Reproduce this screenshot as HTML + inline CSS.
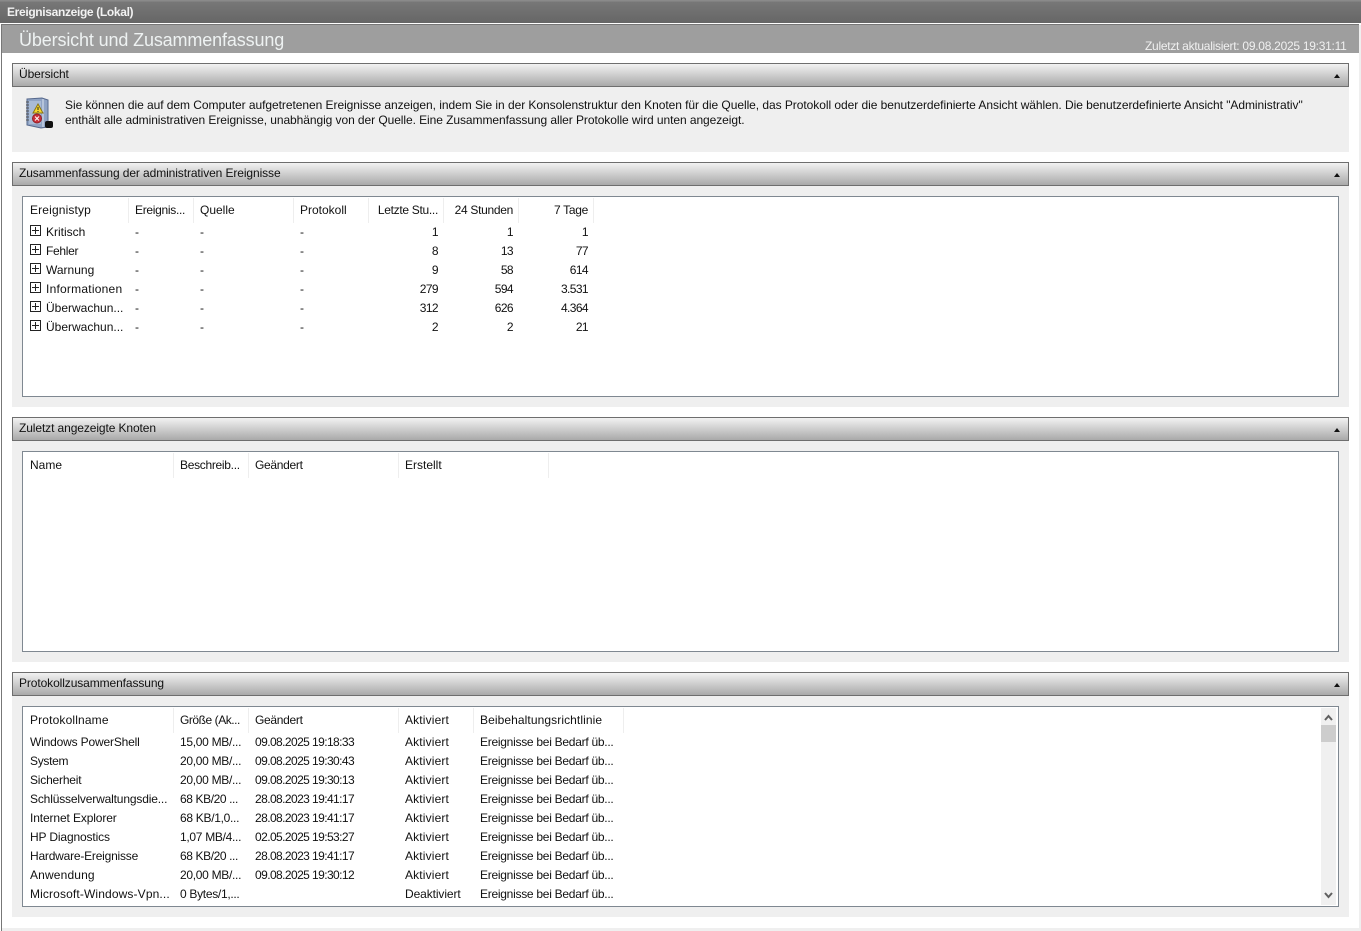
<!DOCTYPE html>
<html lang="de"><head><meta charset="utf-8"><title>Ereignisanzeige</title>
<style>
html,body{margin:0;padding:0;background:#fff;width:1361px;height:931px;overflow:hidden}
body{position:relative;font:12px/15px "Liberation Sans",sans-serif;color:#111}
div,span{position:absolute;white-space:nowrap}
.sh{left:12px;width:1335px;height:22px;border:1px solid #6e6e6e;background:linear-gradient(#f2f2f2,#a9a9a9)}
.sh span{left:6px;top:3px;letter-spacing:-.1px}
.sh i{position:absolute;right:8px;top:10px;width:0;height:0;border:3px solid transparent;border-top:0;border-bottom:4px solid #111}
.bd{left:12px;width:1337px;background:#efefef}
.bx{left:22px;width:1315px;height:199px;border:1px solid #7f8891;background:#fff}
.c{height:25px;width:1px;background:#eee}
.d{letter-spacing:-.58px}
.n{letter-spacing:-.6px}
.e{letter-spacing:-.27px}
.t{letter-spacing:-.3px}
.w{letter-spacing:.15px}
.p{width:9px;height:9px;border:1px solid #222;left:30px;background:linear-gradient(#222,#222) center/7px 1px no-repeat,linear-gradient(#222,#222) center/1px 7px no-repeat,#fff}
</style></head><body>
<div style="left:0;top:0;width:1361px;height:23px;background:linear-gradient(#8a8a8a 0,#8a8a8a 1px,#777 2px,#666 100%)"></div>
<span style="left:7px;top:5px;color:#f2f2f2;font-weight:bold;letter-spacing:-.34px">Ereignisanzeige (Lokal)</span>
<div style="left:1px;top:24px;width:1358px;height:1px;background:#777"></div>
<div style="left:1px;top:24px;width:1px;height:907px;background:#777"></div>
<div style="left:2px;top:25px;width:1357px;height:28px;background:#9e9e9e"></div>
<div style="left:1359px;top:25px;width:2px;height:906px;background:#efefef"></div>
<div style="left:2px;top:928px;width:1359px;height:3px;background:#efefef"></div>
<span style="left:19px;top:28px;font-size:18px;line-height:24px;color:#eef2f2;letter-spacing:-.14px">Übersicht und Zusammenfassung</span>
<span style="left:1145px;top:39px;color:#f0f0f0;letter-spacing:-.27px">Zuletzt aktualisiert: 09.08.2025 19:31:11</span>

<div class="sh" style="top:63px"><span>Übersicht</span><i></i></div>
<div class="bd" style="top:87px;height:65px"></div>
<svg style="position:absolute;left:25px;top:97px" width="30" height="33" viewBox="0 0 30 33">
<path d="M2 2l15-1 6 2v27l-7 1-14-3z" fill="#8fa3c4" stroke="#56688c"/>
<path d="M18 2v28" stroke="#dde4ef"/>
<path d="M4 4h12v23H4z" fill="#a9bbd6"/>
<path d="M1 5h3M1 8h3M1 11h3M1 14h3M1 17h3M1 20h3M1 23h3" stroke="#555"/>
<path d="M13 7l5 9H8z" fill="#f5d72c" stroke="#8a7414"/><path d="M13 10v3M13 14v1" stroke="#222"/>
<circle cx="12" cy="21.500" r="4.500" fill="#c9303a" stroke="#8f2028"/><path d="M10 19.500l4 4M14 19.500l-4 4" stroke="#fff"/>
<rect x="20" y="24" width="8" height="7" rx="2" fill="#111"/>
</svg>
<span style="left:65px;top:98px;letter-spacing:-.05px">Sie können die auf dem Computer aufgetretenen Ereignisse anzeigen, indem Sie in der Konsolenstruktur den Knoten für die Quelle, das Protokoll oder die benutzerdefinierte Ansicht wählen. Die benutzerdefinierte Ansicht "Administrativ"</span>
<span style="left:65px;top:113px;letter-spacing:-.07px">enthält alle administrativen Ereignisse, unabhängig von der Quelle. Eine Zusammenfassung aller Protokolle wird unten angezeigt.</span>

<div class="sh" style="top:162px"><span>Zusammenfassung der administrativen Ereignisse</span><i></i></div>
<div class="bd" style="top:186px;height:221px"></div>
<div class="bx" style="top:196px"></div>
<div class="c" style="left:128px;top:198px"></div><div class="c" style="left:193px;top:198px"></div><div class="c" style="left:293px;top:198px"></div><div class="c" style="left:368px;top:198px"></div><div class="c" style="left:443px;top:198px"></div><div class="c" style="left:518px;top:198px"></div><div class="c" style="left:593px;top:198px"></div>
<span class="w" style="left:30px;top:203px">Ereignistyp</span><span class="t" style="left:135px;top:203px">Ereignis...</span><span style="left:200px;top:203px">Quelle</span><span style="left:300px;top:203px">Protokoll</span><span class="t" style="right:923px;top:203px">Letzte Stu...</span><span class="t" style="right:848px;top:203px">24 Stunden</span><span class="t" style="right:773px;top:203px">7 Tage</span>

<div class="p" style="top:225px"></div><span style="left:46px;top:225px">Kritisch</span><span style="left:135px;top:225px">-</span><span style="left:200px;top:225px">-</span><span style="left:300px;top:225px">-</span><span class="n" style="right:923px;top:225px">1</span><span class="n" style="right:848px;top:225px">1</span><span class="n" style="right:773px;top:225px">1</span>
<div class="p" style="top:244px"></div><span class="t" style="left:46px;top:244px">Fehler</span><span style="left:135px;top:244px">-</span><span style="left:200px;top:244px">-</span><span style="left:300px;top:244px">-</span><span class="n" style="right:923px;top:244px">8</span><span class="n" style="right:848px;top:244px">13</span><span class="n" style="right:773px;top:244px">77</span>
<div class="p" style="top:263px"></div><span style="left:46px;top:263px">Warnung</span><span style="left:135px;top:263px">-</span><span style="left:200px;top:263px">-</span><span style="left:300px;top:263px">-</span><span class="n" style="right:923px;top:263px">9</span><span class="n" style="right:848px;top:263px">58</span><span class="n" style="right:773px;top:263px">614</span>
<div class="p" style="top:282px"></div><span class="w" style="left:46px;top:282px;letter-spacing:.23px">Informationen</span><span style="left:135px;top:282px">-</span><span style="left:200px;top:282px">-</span><span style="left:300px;top:282px">-</span><span class="n" style="right:923px;top:282px">279</span><span class="n" style="right:848px;top:282px">594</span><span class="n" style="right:773px;top:282px">3.531</span>
<div class="p" style="top:301px"></div><span style="left:46px;top:301px">Überwachun...</span><span style="left:135px;top:301px">-</span><span style="left:200px;top:301px">-</span><span style="left:300px;top:301px">-</span><span class="n" style="right:923px;top:301px">312</span><span class="n" style="right:848px;top:301px">626</span><span class="n" style="right:773px;top:301px">4.364</span>
<div class="p" style="top:320px"></div><span style="left:46px;top:320px">Überwachun...</span><span style="left:135px;top:320px">-</span><span style="left:200px;top:320px">-</span><span style="left:300px;top:320px">-</span><span class="n" style="right:923px;top:320px">2</span><span class="n" style="right:848px;top:320px">2</span><span class="n" style="right:773px;top:320px">21</span>

<div class="sh" style="top:417px"><span>Zuletzt angezeigte Knoten</span><i></i></div>
<div class="bd" style="top:441px;height:221px"></div>
<div class="bx" style="top:451px"></div>
<div class="c" style="left:173px;top:453px"></div><div class="c" style="left:248px;top:453px"></div><div class="c" style="left:398px;top:453px"></div><div class="c" style="left:548px;top:453px"></div>
<span style="left:30px;top:458px">Name</span><span class="t" style="left:180px;top:458px">Beschreib...</span><span class="t" style="left:255px;top:458px">Geändert</span><span style="left:405px;top:458px">Erstellt</span>

<div class="sh" style="top:672px"><span>Protokollzusammenfassung</span><i></i></div>
<div class="bd" style="top:696px;height:221px"></div>
<div class="bx" style="top:706px"></div>
<div class="c" style="left:173px;top:708px"></div><div class="c" style="left:248px;top:708px"></div><div class="c" style="left:398px;top:708px"></div><div class="c" style="left:473px;top:708px"></div><div class="c" style="left:623px;top:708px"></div>
<span class="w" style="left:30px;top:713px">Protokollname</span><span class="t" style="left:180px;top:713px;letter-spacing:-.45px">Größe (Ak...</span><span class="t" style="left:255px;top:713px">Geändert</span><span class="w" style="left:405px;top:713px">Aktiviert</span><span style="left:480px;top:713px;letter-spacing:.09px">Beibehaltungsrichtlinie</span>

<span style="left:30px;top:735px;letter-spacing:-.17px">Windows PowerShell</span><span class="t" style="left:180px;top:735px">15,00 MB/...</span><span class="d" style="left:255px;top:735px">09.08.2025 19:18:33</span><span class="w" style="left:405px;top:735px">Aktiviert</span><span class="e" style="left:480px;top:735px">Ereignisse bei Bedarf üb...</span>
<span class="t" style="left:30px;top:754px">System</span><span class="t" style="left:180px;top:754px">20,00 MB/...</span><span class="d" style="left:255px;top:754px">09.08.2025 19:30:43</span><span class="w" style="left:405px;top:754px">Aktiviert</span><span class="e" style="left:480px;top:754px">Ereignisse bei Bedarf üb...</span>
<span style="left:30px;top:773px;letter-spacing:-.2px">Sicherheit</span><span class="t" style="left:180px;top:773px">20,00 MB/...</span><span class="d" style="left:255px;top:773px">09.08.2025 19:30:13</span><span class="w" style="left:405px;top:773px">Aktiviert</span><span class="e" style="left:480px;top:773px">Ereignisse bei Bedarf üb...</span>
<span style="left:30px;top:792px;letter-spacing:-.16px">Schlüsselverwaltungsdie...</span><span style="left:180px;top:792px;letter-spacing:-.4px">68 KB/20 ...</span><span class="d" style="left:255px;top:792px">28.08.2023 19:41:17</span><span class="w" style="left:405px;top:792px">Aktiviert</span><span class="e" style="left:480px;top:792px">Ereignisse bei Bedarf üb...</span>
<span style="left:30px;top:811px;letter-spacing:-.12px">Internet Explorer</span><span class="t" style="left:180px;top:811px">68 KB/1,0...</span><span class="d" style="left:255px;top:811px">28.08.2023 19:41:17</span><span class="w" style="left:405px;top:811px">Aktiviert</span><span class="e" style="left:480px;top:811px">Ereignisse bei Bedarf üb...</span>
<span style="left:30px;top:830px;letter-spacing:-.14px">HP Diagnostics</span><span class="t" style="left:180px;top:830px">1,07 MB/4...</span><span class="d" style="left:255px;top:830px">02.05.2025 19:53:27</span><span class="w" style="left:405px;top:830px">Aktiviert</span><span class="e" style="left:480px;top:830px">Ereignisse bei Bedarf üb...</span>
<span style="left:30px;top:849px;letter-spacing:-.21px">Hardware-Ereignisse</span><span style="left:180px;top:849px;letter-spacing:-.4px">68 KB/20 ...</span><span class="d" style="left:255px;top:849px">28.08.2023 19:41:17</span><span class="w" style="left:405px;top:849px">Aktiviert</span><span class="e" style="left:480px;top:849px">Ereignisse bei Bedarf üb...</span>
<span class="w" style="left:30px;top:868px">Anwendung</span><span class="t" style="left:180px;top:868px">20,00 MB/...</span><span class="d" style="left:255px;top:868px">09.08.2025 19:30:12</span><span class="w" style="left:405px;top:868px">Aktiviert</span><span class="e" style="left:480px;top:868px">Ereignisse bei Bedarf üb...</span>
<span style="left:30px;top:887px;letter-spacing:.13px">Microsoft-Windows-Vpn...</span><span class="t" style="left:180px;top:887px">0 Bytes/1,...</span><span style="left:405px;top:887px;letter-spacing:-.1px">Deaktiviert</span><span class="e" style="left:480px;top:887px">Ereignisse bei Bedarf üb...</span>

<div style="left:1321px;top:708px;width:15px;height:197px;background:#f0f0f0"></div>
<div style="left:1321px;top:725px;width:15px;height:17px;background:#cdcdcd"></div>
<svg style="position:absolute;left:1321px;top:708px" width="15" height="197" viewBox="0 0 15 197"><path d="M4 12l3.500-4 3.500 4M4 185l3.500 4 3.500-4" fill="none" stroke="#606060" stroke-width="2"/></svg>
</body></html>
